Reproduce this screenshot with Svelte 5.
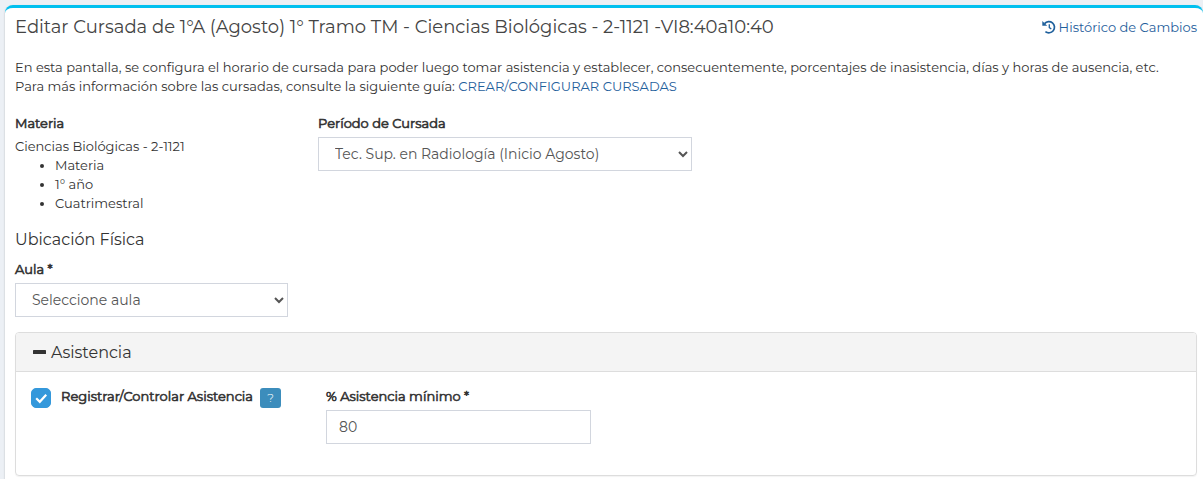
<script lang="ts">
  const title = "Editar Cursada de 1°A (Agosto) 1° Tramo TM - Ciencias Biológicas - 2-1121 -VI8:40a10:40";
  const subject = {
    name: "Ciencias Biológicas - 2-1121",
    details: ["Materia", "1° año", "Cuatrimestral"],
  };
  const periods = ["Tec. Sup. en Radiología (Inicio Agosto)"];

  let period = $state(periods[0]);
  let room = $state("");
  let open = $state(true);
  let trackAttendance = $state(true);
  let minAttendance = $state("80");
</script>

<main class="box">
  <header class="box-header">
    <h1>{title}</h1>
    <a class="history" href="#historico">
      <svg viewBox="0 0 14 14" width="14" height="14" aria-hidden="true">
        <path d="M2.6 3.6A5.6 5.6 0 1 1 3.4 11.6" fill="none" stroke="currentColor" stroke-width="1.7" />
        <path d="M0.3 1v4.8h4.9z" fill="currentColor" />
        <path d="M7.3 4.2v3.4l2 1.4" fill="none" stroke="currentColor" stroke-width="1.3" />
      </svg>
      Histórico de Cambios
    </a>
  </header>

  <p class="intro">
    En esta pantalla, se configura el horario de cursada para poder luego tomar asistencia y establecer, consecuentemente, porcentajes de inasistencia, días y horas de ausencia, etc.<br />
    Para más información sobre las cursadas, consulte la siguiente guía: <a href="#guia">CREAR/CONFIGURAR CURSADAS</a>
  </p>

  <div class="row">
    <section class="col-3">
      <h2 class="label">Materia</h2>
      <div>{subject.name}</div>
      <ul>
        {#each subject.details as detail}
          <li>{detail}</li>
        {/each}
      </ul>
    </section>
    <div class="col-4">
      <label class="label" for="period">Período de Cursada</label>
      <select id="period" class="control" bind:value={period}>
        {#each periods as p}
          <option value={p}>{p}</option>
        {/each}
      </select>
    </div>
  </div>

  <h2 class="subtitle">Ubicación Física</h2>
  <div class="row">
    <div class="col-3">
      <label class="label" for="room">Aula *</label>
      <select id="room" class="control" bind:value={room}>
        <option value="">Seleccione aula</option>
      </select>
    </div>
  </div>

  <section class="panel">
    <h2 class="panel-heading">
      <button type="button" aria-expanded={open} onclick={() => (open = !open)}>
        <svg viewBox="0 0 14 14" width="14" height="14" aria-hidden="true">
          <rect x="1" y="4" width="13" height="4" rx="0.6" fill="currentColor" />
          {#if !open}
            <rect x="5" y="0" width="4" height="12" rx="0.6" fill="currentColor" />
          {/if}
        </svg>
        Asistencia
      </button>
    </h2>
    {#if open}
      <div class="row panel-body">
        <div class="col-3 check">
          <input id="track" type="checkbox" bind:checked={trackAttendance} />
          <label class="label" for="track">Registrar/Controlar Asistencia</label>
          <button class="help" type="button" aria-label="Ayuda">?</button>
        </div>
        <div class="col-3">
          <label class="label" for="minimum">% Asistencia mínimo *</label>
          <input id="minimum" class="control" type="text" bind:value={minAttendance} />
        </div>
      </div>
    {/if}
  </section>
</main>

<style>
  :global(body) {
    background: #ecf0f5;
    overflow: hidden;
  }

  .box,
  .box :is(input, select, button) {
    font-family: Montserrat, Inter, sans-serif;
  }

  .box {
    margin: 5px 0 0 5px;
    padding: 0 6px 20px 10px;
    border-top: 3px solid #00c0ef;
    border-radius: 8px;
    background: #fff;
    box-shadow: 0 1px 2px rgba(0, 0, 0, 0.25);
    color: #333;
    font-size: 13px;
    line-height: 19px;
  }

  h1,
  h2,
  p,
  ul {
    margin: 0;
    font-weight: 400;
  }

  a {
    color: #1f609c;
    text-decoration: none;
  }

  .box-header {
    display: flex;
    align-items: center;
    justify-content: space-between;
    padding: 8px 0;
    margin-bottom: 12px;
  }

  h1 {
    color: #444;
    font-size: 18px;
    line-height: 22px;
  }

  .history {
    display: flex;
    align-items: center;
    gap: 3px;
    white-space: nowrap;
  }

  .intro {
    margin-bottom: 18px;
  }

  .row {
    display: grid;
    grid-template-columns: repeat(12, minmax(0, 1fr));
    column-gap: 30px;
  }

  .col-3 {
    grid-column: span 3;
  }

  .col-4 {
    grid-column: span 4;
  }

  /* emboldened regular cut, keeps the narrower letter widths */
  .label {
    display: block;
    margin-bottom: 4px;
    font-size: 13px;
    font-weight: 400;
    line-height: 19px;
    -webkit-text-stroke: 0.6px currentColor;
  }

  ul {
    padding-left: 40px;
  }

  .control {
    display: block;
    box-sizing: border-box;
    width: 100%;
    height: 34px;
    padding: 6px 12px;
    border: 1px solid #d2d6de;
    border-radius: 0;
    background: #fff;
    color: #555;
    font-size: 14px;
  }

  .subtitle {
    margin: 16px 0 9px;
    font-size: 16px;
    line-height: 22px;
  }

  .panel {
    margin-top: 15px;
    border: 1px solid #ddd;
    border-radius: 4px;
    box-shadow: 0 1px 1px rgba(0, 0, 0, 0.05);
  }

  .panel-heading {
    padding: 9px 15px 7px;
    border-bottom: 1px solid #ddd;
    border-radius: 3px 3px 0 0;
    background: #f4f4f4;
    font-size: 16px;
    line-height: 22px;
  }

  .panel-heading button {
    display: flex;
    align-items: center;
    gap: 5px;
    padding: 0 1px;
    border: 0;
    background: none;
    color: #333;
    font-size: 16px;
    line-height: 22px;
  }

  .panel-body {
    padding: 15px 15px 31px;
  }

  .check {
    display: flex;
    align-items: flex-start;
    white-space: nowrap;
  }

  .check input {
    flex: none;
    appearance: none;
    width: 20px;
    height: 20px;
    margin: 1px 10px 0 0;
    border: 1px solid #3498db;
    border-radius: 5px;
  }

  .check input:checked {
    background: #3498db url("data:image/svg+xml,%3Csvg xmlns='http://www.w3.org/2000/svg' viewBox='0 0 18 18'%3E%3Cpath d='M4.2 9.2l3.6 3.6 6.4-7' fill='none' stroke='white' stroke-width='2.2'/%3E%3C/svg%3E") center / 18px no-repeat;
  }

  .help {
    width: 21px;
    height: 20px;
    margin: 1px 0 0 7px;
    padding: 0;
    border: 0;
    border-radius: 3px;
    background: #3c8dbc;
    color: #fff;
    font-size: 12px;
    font-weight: 300;
    line-height: 20px;
  }
</style>
